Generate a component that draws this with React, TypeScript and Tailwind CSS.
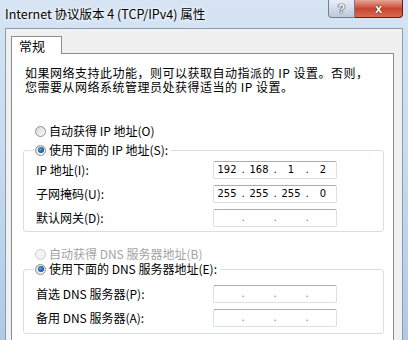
import React from "react";

const cjk = "font-['Noto_Sans_CJK_SC','Noto_Sans',sans-serif]";

function Radio({ checked, disabled }: { checked?: boolean; disabled?: boolean }) {
  return (
    <span
      className={`w-[11px] h-[11px] rounded-full border shrink-0 flex items-center justify-center ${
        disabled
          ? "border-[#cdcdcd] bg-[#f3f3f3]"
          : "border-[#8e8f8f] bg-gradient-to-br from-[#d9d9d9] to-[#fbfbfb]"
      }`}
    >
      {checked && (
        <span className="w-[6px] h-[6px] rounded-full bg-[radial-gradient(circle_at_40%_40%,#4fa3e6_0%,#1b5c9a_60%,#0d3a6b_100%)]" />
      )}
    </span>
  );
}

function IpBox({ values }: { values?: string[] }) {
  const v = values ?? ["", "", "", ""];
  return (
    <div className="w-[124px] h-[18px] shrink-0 border border-[#dbdfe6] border-t-[#abadb3] rounded-[2px] bg-white flex items-center pl-px font-['Liberation_Sans_Narrow','DejaVu_Sans_Condensed','Liberation_Sans',sans-serif] text-[11px] leading-[14px] text-black">
      <span className="w-[24px] flex justify-center whitespace-nowrap">{v[0]}</span>
      <span className={`w-[8px] flex justify-center ${values ? "" : "text-[#777]"}`}>.</span>
      <span className="w-[24px] flex justify-center whitespace-nowrap">{v[1]}</span>
      <span className={`w-[8px] flex justify-center ${values ? "" : "text-[#777]"}`}>.</span>
      <span className="w-[24px] flex justify-center whitespace-nowrap">{v[2]}</span>
      <span className={`w-[8px] flex justify-center ${values ? "" : "text-[#777]"}`}>.</span>
      <span className="w-[24px] flex justify-center whitespace-nowrap">{v[3]}</span>
    </div>
  );
}

function Row({ label, values, first }: { label: string; values?: string[]; first?: boolean }) {
  return (
    <div className={`h-[18px] flex items-center pl-[12px] ${first ? "" : "mt-[6px]"}`}>
      <span className="w-[177px] shrink-0 whitespace-nowrap">{label}</span>
      <IpBox values={values} />
    </div>
  );
}

export default function App() {
  return (
    <div
      className={`w-[408px] h-[340px] overflow-hidden flex flex-col bg-gradient-to-b from-[#d6e4f3] via-[#c6daef] to-[#aec9e8] ${cjk} text-[12px] text-black`}
    >
      {/* title bar */}
      <div className="h-[28px] shrink-0 flex items-start">
        <div className="pl-[5px] pt-[5px] text-[12.5px] leading-[17px] whitespace-nowrap text-black [text-shadow:0_0_6px_#ffffff,0_0_3px_#ffffff]">
          Internet 协议版本 4 (TCP/IPv4) 属性
        </div>
        <div className="ml-auto mr-[5px] flex">
          <div className="w-[27px] h-[18px] border border-[#6f819a] border-t-0 rounded-bl-[4px] bg-gradient-to-b from-[#e9eef5] via-[#d2dce9] to-[#bccadb] flex items-center justify-center font-['Liberation_Sans',sans-serif] text-[13px] font-bold text-white [text-shadow:0_0_1px_#22344d,0_0_1px_#22344d,0_0_1px_#22344d]">
            ?
          </div>
          <div className="w-[48px] h-[18px] border border-[#5b231c] border-t-0 border-l-0 rounded-br-[4px] bg-gradient-to-b from-[#e7a597] via-[#c94532] to-[#d66a4f] flex items-center justify-center font-['Liberation_Sans',sans-serif] text-[13px] font-bold text-white [text-shadow:0_0_1px_#3b0f0a,0_0_1px_#3b0f0a]">
            x
          </div>
        </div>
      </div>

      {/* client area */}
      <div className="flex-1 mx-[5px] border border-[#8d9bb0] border-b-0 bg-[#f0f0f0] pt-[7px] pl-[5px] pr-[8px] flex flex-col">
        <div className="relative z-10 w-[51px] h-[18px] -mb-px bg-white border border-[#898c95] border-b-0 pl-[7px] text-[13px] leading-[17px]">
          常规
        </div>
        <div className="flex-1 bg-white border border-[#898c95] border-b-0 flex flex-col">
          <p className="pt-[12px] pl-[13px] text-[12px] leading-[14px] tracking-[0.5px] whitespace-nowrap">
            如果网络支持此功能，则可以获取自动指派的 IP 设置。否则，
            <br />
            您需要从网络系统管理员处获得适当的 IP 设置。
          </p>

          <div className="mt-[30px] ml-[23px] h-[14px] flex items-center gap-[3px] leading-[14px]">
            <Radio />
            <span>自动获得 IP 地址(O)</span>
          </div>

          <fieldset className="mt-[5px] ml-[11px] w-[361px] border border-[#d5dfe5] rounded-[3px] pb-[4px]">
            <legend className="ml-[10px] pl-px pr-[3px] h-[14px] flex items-center gap-[3px] leading-[14px]">
              <Radio checked />
              <span>使用下面的 IP 地址(S):</span>
            </legend>
            <div className="pt-[4px]">
              <Row first label="IP 地址(I):" values={["192", "168", "1", "2"]} />
              <Row label="子网掩码(U):" values={["255", "255", "255", "0"]} />
              <Row label="默认网关(D):" />
            </div>
          </fieldset>

          <div className="mt-[15px] ml-[23px] h-[14px] flex items-center gap-[3px] leading-[14px] text-[#a3a3a3]">
            <Radio disabled />
            <span>自动获得 DNS 服务器地址(B)</span>
          </div>

          <fieldset className="mt-px ml-[11px] w-[361px] border border-[#d5dfe5] rounded-[3px] pb-[6px]">
            <legend className="ml-[10px] pl-px pr-[3px] h-[14px] flex items-center gap-[3px] leading-[14px]">
              <Radio checked />
              <span>使用下面的 DNS 服务器地址(E):</span>
            </legend>
            <div className="pt-[9px]">
              <Row first label="首选 DNS 服务器(P):" />
              <Row label="备用 DNS 服务器(A):" />
            </div>
          </fieldset>
        </div>
      </div>
    </div>
  );
}
